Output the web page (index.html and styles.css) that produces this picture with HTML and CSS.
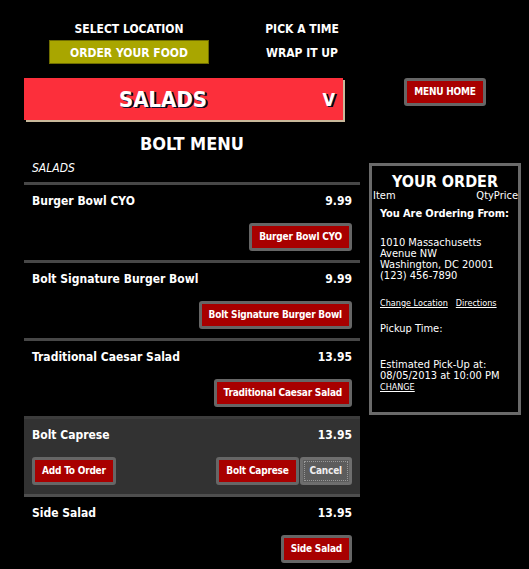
FILE: index.html
```html
<!DOCTYPE html>
<html>
<head>
<meta charset="utf-8">
<title>Bolt Menu</title>
<link rel="stylesheet" href="styles.css">
</head>
<body>
<div class="page">
  <nav class="steps">
    <div class="step">SELECT LOCATION</div>
    <div class="step">PICK A TIME</div>
    <div class="step active">ORDER YOUR FOOD</div>
    <div class="step">WRAP IT UP</div>
  </nav>
  <div class="main">
    <div class="menu">
      <div class="category"><span class="cat-name">SALADS</span><span class="caret">V</span></div>
      <h1 class="title">BOLT MENU</h1>
      <div class="section-label">SALADS</div>

      <div class="item">
        <div class="item-head"><span>Burger Bowl CYO</span><span>9.99</span></div>
        <div class="item-actions"><button class="btn">Burger Bowl CYO</button></div>
      </div>
      <div class="item">
        <div class="item-head"><span>Bolt Signature Burger Bowl</span><span>9.99</span></div>
        <div class="item-actions"><button class="btn">Bolt Signature Burger Bowl</button></div>
      </div>
      <div class="item">
        <div class="item-head"><span>Traditional Caesar Salad</span><span>13.95</span></div>
        <div class="item-actions"><button class="btn">Traditional Caesar Salad</button></div>
      </div>
      <div class="item selected">
        <div class="item-head"><span>Bolt Caprese</span><span>13.95</span></div>
        <div class="item-actions split">
          <button class="btn">Add To Order</button>
          <div class="btn-group"><button class="btn">Bolt Caprese</button><button class="btn cancel">Cancel</button></div>
        </div>
      </div>
      <div class="item">
        <div class="item-head"><span>Side Salad</span><span>13.95</span></div>
        <div class="item-actions"><button class="btn">Side Salad</button></div>
      </div>
    </div>

    <aside class="side">
      <div class="home-wrap"><button class="btn home">MENU HOME</button></div>
      <div class="order">
        <h2 class="order-title">YOUR ORDER</h2>
        <div class="order-cols"><span>Item</span><span>QtyPrice</span></div>
        <div class="order-body">
          <p class="strong">You Are Ordering From:</p>
          <p class="address">1010 Massachusetts<br>Avenue NW<br>Washington, DC 20001<br>(123) 456-7890</p>
          <p class="links"><a href="#">Change Location</a><a href="#">Directions</a></p>
          <p class="pickup">Pickup Time:</p>
          <p class="estimate">Estimated Pick-Up at:<br>08/05/2013 at 10:00 PM<br><a href="#" class="small">CHANGE</a></p>
        </div>
      </div>
    </aside>
  </div>
</div>
</body>
</html>
```

FILE: styles.css
```css
html, body {
  margin: 0;
  padding: 0;
  background: #000;
}

body {
  color: #fff;
  font-family: "DejaVu Sans Condensed", "DejaVu Sans", sans-serif;
  font-stretch: condensed;
  font-size: 12px;
}

.page {
  width: 529px;
}

.steps {
  display: grid;
  grid-template-columns: 160px 160px;
  grid-auto-rows: 24px;
  column-gap: 13px;
  padding: 16px 0 0 49px;
}

.step {
  display: flex;
  align-items: center;
  justify-content: center;
  box-sizing: border-box;
  border: 1px solid transparent;
  font-weight: bold;
  font-size: 12px;
  padding-top: 1px;
}

.step.active {
  background: #a9a600;
  border-color: #6f6d00;
}

.main {
  display: flex;
  padding-left: 24px;
  margin-top: 14px;
}

.menu {
  width: 336px;
}

.category {
  display: flex;
  align-items: center;
  width: 319px;
  height: 42px;
  background: #fc2f3b;
  box-shadow: 2px 2px 0 #c9b99b;
  font-weight: bold;
  text-shadow: 1px 1px 0 #0a1230, 2px 1px 0 #000;
}

.cat-name {
  flex: 1;
  text-align: center;
  font-size: 22px;
  padding-top: 1px;
}

.caret {
  width: 41px;
  box-sizing: border-box;
  padding-right: 8px;
  text-align: right;
  font-size: 18px;
}

.title {
  margin: 13px 0 0;
  text-align: center;
  font-size: 18px;
  line-height: 22px;
}

.section-label {
  margin: 6px 0 0 8px;
  font-style: italic;
  font-size: 12px;
  line-height: 14px;
  height: 21px;
}

.item {
  border-top: 3px solid #474747;
  padding: 8px 8px 9px;
}

.item.selected {
  background: #323232;
  border-top-color: #3c3c3c;
}

.item.selected + .item {
  border-top-color: #4e4e4e;
}

.item-head {
  display: flex;
  justify-content: space-between;
  font-weight: bold;
  font-size: 12px;
  line-height: 16px;
}

.item-actions {
  display: flex;
  justify-content: flex-end;
  margin-top: 14px;
}

.item-actions.split {
  justify-content: space-between;
}

.btn-group {
  display: flex;
  gap: 1px;
}

.btn {
  box-sizing: border-box;
  height: 28px;
  padding: 0 7px;
  border: 3px solid #666;
  border-radius: 3px;
  background: #a80000;
  color: #fff;
  font-family: "DejaVu Sans Condensed", "DejaVu Sans", sans-serif;
  font-stretch: condensed;
  font-weight: bold;
  font-size: 10px;
  letter-spacing: -0.2px;
  line-height: 20px;
  cursor: pointer;
}

.btn.cancel {
  background: #5c5c5c;
  border-color: #6e6e6e;
  color: #eee;
  outline: 1px dotted #999;
  outline-offset: -5px;
}

.side {
  width: 152px;
  margin-left: 9px;
}

.home-wrap {
  display: flex;
  justify-content: center;
}

.btn.home {
  width: 82px;
  padding: 0;
  font-size: 10px;
}

.order {
  margin-top: 57px;
  height: 252px;
  box-sizing: border-box;
  border: 3px solid #6a6a6a;
}

.order-title {
  margin: 8px 0 0;
  text-align: center;
  font-size: 16px;
  line-height: 16px;
}

.order-cols {
  display: flex;
  justify-content: space-between;
  padding: 0 0 0 1px;
  font-size: 11px;
  line-height: 12px;
}

.order-body {
  padding: 0 0 0 8px;
  font-size: 11px;
  line-height: 11px;
  white-space: nowrap;
}

.order-body p {
  margin: 0;
}

.order-body .strong {
  margin-top: 6px;
  font-weight: bold;
  font-size: 11px;
  letter-spacing: -0.1px;
  line-height: 12px;
}

.order-body .address {
  margin-top: 17px;
}

.order-body .links {
  display: flex;
  gap: 8px;
  margin-top: 16px;
  font-size: 9px;
  line-height: 12px;
}

a {
  color: #fff;
}

.order-body .pickup {
  margin-top: 14px;
  line-height: 12px;
}

.order-body .estimate {
  margin-top: 24px;
}

.small {
  font-size: 9px;
}
```
